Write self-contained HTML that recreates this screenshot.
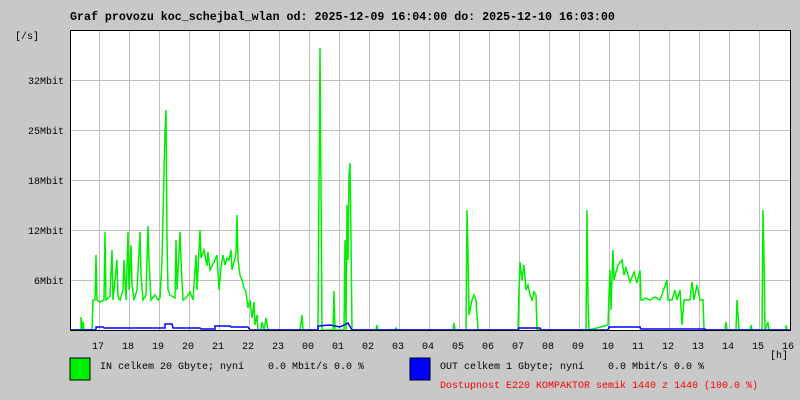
<!DOCTYPE html>
<html><head><meta charset="utf-8"><style>
html,body{margin:0;padding:0;background:#c8c8c8;}
body{width:800px;height:400px;position:relative;overflow:hidden;font-family:"Liberation Mono",monospace;}
.t{position:absolute;white-space:pre;font-size:10px;line-height:10px;color:#000;}
</style></head><body>
<div class="t" style="left:70px;top:13px;font-size:11.65px;font-weight:bold;">Graf provozu koc_schejbal_wlan od: 2025-12-09 16:04:00 do: 2025-12-10 16:03:00</div>
<div class="t" style="left:15px;top:33px;">[/s]</div>
<div class="t" style="left:28px;top:78px;">32Mbit</div>
<div class="t" style="left:28px;top:128px;">25Mbit</div>
<div class="t" style="left:28px;top:178px;">18Mbit</div>
<div class="t" style="left:28px;top:228px;">12Mbit</div>
<div class="t" style="left:28px;top:278px;"> 6Mbit</div>
<svg width="800" height="400" style="position:absolute;left:0;top:0">
<rect x="70" y="30" width="720" height="300" fill="#fff"/>
<g stroke="#c0c0c0" stroke-width="1">
<path d="M70 80.5H790M70 130.5H790M70 180.5H790M70 230.5H790M70 280.5H790"/>
<path d="M99.5 30V330M129.5 30V330M159.5 30V330M189.5 30V330M219.5 30V330M249.5 30V330M279.5 30V330M309.5 30V330M339.5 30V330M369.5 30V330M399.5 30V330M429.5 30V330M459.5 30V330M489.5 30V330M519.5 30V330M549.5 30V330M579.5 30V330M609.5 30V330M639.5 30V330M669.5 30V330M699.5 30V330M729.5 30V330M759.5 30V330"/>
</g>
<polyline fill="none" stroke="#00ee00" stroke-width="1.5" points="70,330 81,330 81,317 82,330 83,322 84,330 92,330 93,300 95,300 96,255 97,300 100,302 104,300 105,232 106,300 110,296 112,250 113,300 117,260 118,297 120,300 123,290 124,260 126,300 128,232 129,290 131,245 132,285 134,300 137,290 140,232 141,275 143,300 146,295 148,226 149,260 151,300 155,295 158,300 160,298 162,260 165,130 166,110 167,240 168,290 170,295 175,298 176,240 177,290 180,232 181,260 183,300 186,298 190,292 193,300 196,255 197,290 200,230 201,258 204,250 207,266 208,252 210,270 214,262 217,255 219,290 221,268 223,255 225,265 227,258 229,260 231,250 232,270 234,262 236,253 237,215 238,260 240,275 242,280 244,288 246,292 248,308 250,300 252,318 254,302 255,325 257,315 258,330 261,330 262,322 264,330 266,318 268,330 300,330 302,315 303,330 318,330 319,188 320,48 321,188 322,330 333,330 334,291 335,330 344,330 345,240 346,330 347,205 348,260 349,175 350,163 351,240 352,330 376,330 377,325 378,330 395,330 396,328 397,330 453,330 454,323 455,330 466,330 467,210 468,255 469,315 472,300 474,295 476,300 478,330 518,330 519,290 520,262 522,280 524,265 526,290 528,285 530,295 532,300 534,292 536,295 537,330 586,330 587,210 588,300 589,330 608,325 609,295 610,270 611,310 613,250 614,280 616,272 618,265 622,260 624,275 626,268 630,282 634,272 637,283 640,270 641,300 643,300 645,298 650,300 655,297 660,300 667,280 668,300 672,300 675,290 677,300 680,290 682,325 684,300 690,300 692,282 694,300 697,285 700,300 703,300 704,330 725,330 726,322 727,330 736,330 737,300 738,315 739,330 750,330 751,325 752,330 762,330 763,210 764,258 765,330 768,322 769,330 786,330 786,325 787,330 790,330"/>
<polyline fill="none" stroke="#0000ff" stroke-width="1.5" points="70,330 96,330 96,327 103,327 104,328 128,328 131,328 165,328 165,324 172,324 173,328 200,328 201,329 215,329 215,326 230,326 231,327 248,327 250,330 318,330 318,326 330,325 340,327 348,323 352,330 518,330 519,328 540,328 541,330 608,330 609,327 640,327 641,329 705,329 706,330 790,330"/>
<path d="M70.5 30V330.5H790.5V30M70 30.5H790" fill="none" stroke="#000" stroke-width="1"/>
<rect x="70" y="358" width="20" height="22" fill="#00ee00" stroke="#000"/>
<rect x="410" y="358" width="20" height="22" fill="#0000ff" stroke="#000"/>
</svg>
<div class="t" style="left:92px;top:343px;">17</div>
<div class="t" style="left:122px;top:343px;">18</div>
<div class="t" style="left:152px;top:343px;">19</div>
<div class="t" style="left:182px;top:343px;">20</div>
<div class="t" style="left:212px;top:343px;">21</div>
<div class="t" style="left:242px;top:343px;">22</div>
<div class="t" style="left:272px;top:343px;">23</div>
<div class="t" style="left:302px;top:343px;">00</div>
<div class="t" style="left:332px;top:343px;">01</div>
<div class="t" style="left:362px;top:343px;">02</div>
<div class="t" style="left:392px;top:343px;">03</div>
<div class="t" style="left:422px;top:343px;">04</div>
<div class="t" style="left:452px;top:343px;">05</div>
<div class="t" style="left:482px;top:343px;">06</div>
<div class="t" style="left:512px;top:343px;">07</div>
<div class="t" style="left:542px;top:343px;">08</div>
<div class="t" style="left:572px;top:343px;">09</div>
<div class="t" style="left:602px;top:343px;">10</div>
<div class="t" style="left:632px;top:343px;">11</div>
<div class="t" style="left:662px;top:343px;">12</div>
<div class="t" style="left:692px;top:343px;">13</div>
<div class="t" style="left:722px;top:343px;">14</div>
<div class="t" style="left:752px;top:343px;">15</div>
<div class="t" style="left:782px;top:343px;">16</div>
<div class="t" style="left:770px;top:352px;">[h]</div>
<div class="t" style="left:100px;top:363px;">IN celkem 20 Gbyte; nyní    0.0 Mbit/s 0.0 %</div>
<div class="t" style="left:440px;top:363px;">OUT celkem 1 Gbyte; nyní    0.0 Mbit/s 0.0 %</div>
<div class="t" style="left:440px;top:382px;color:#ff0000;">Dostupnost E220 KOMPAKTOR semik 1440 z 1440 (100.0 %)</div>
</body></html>
